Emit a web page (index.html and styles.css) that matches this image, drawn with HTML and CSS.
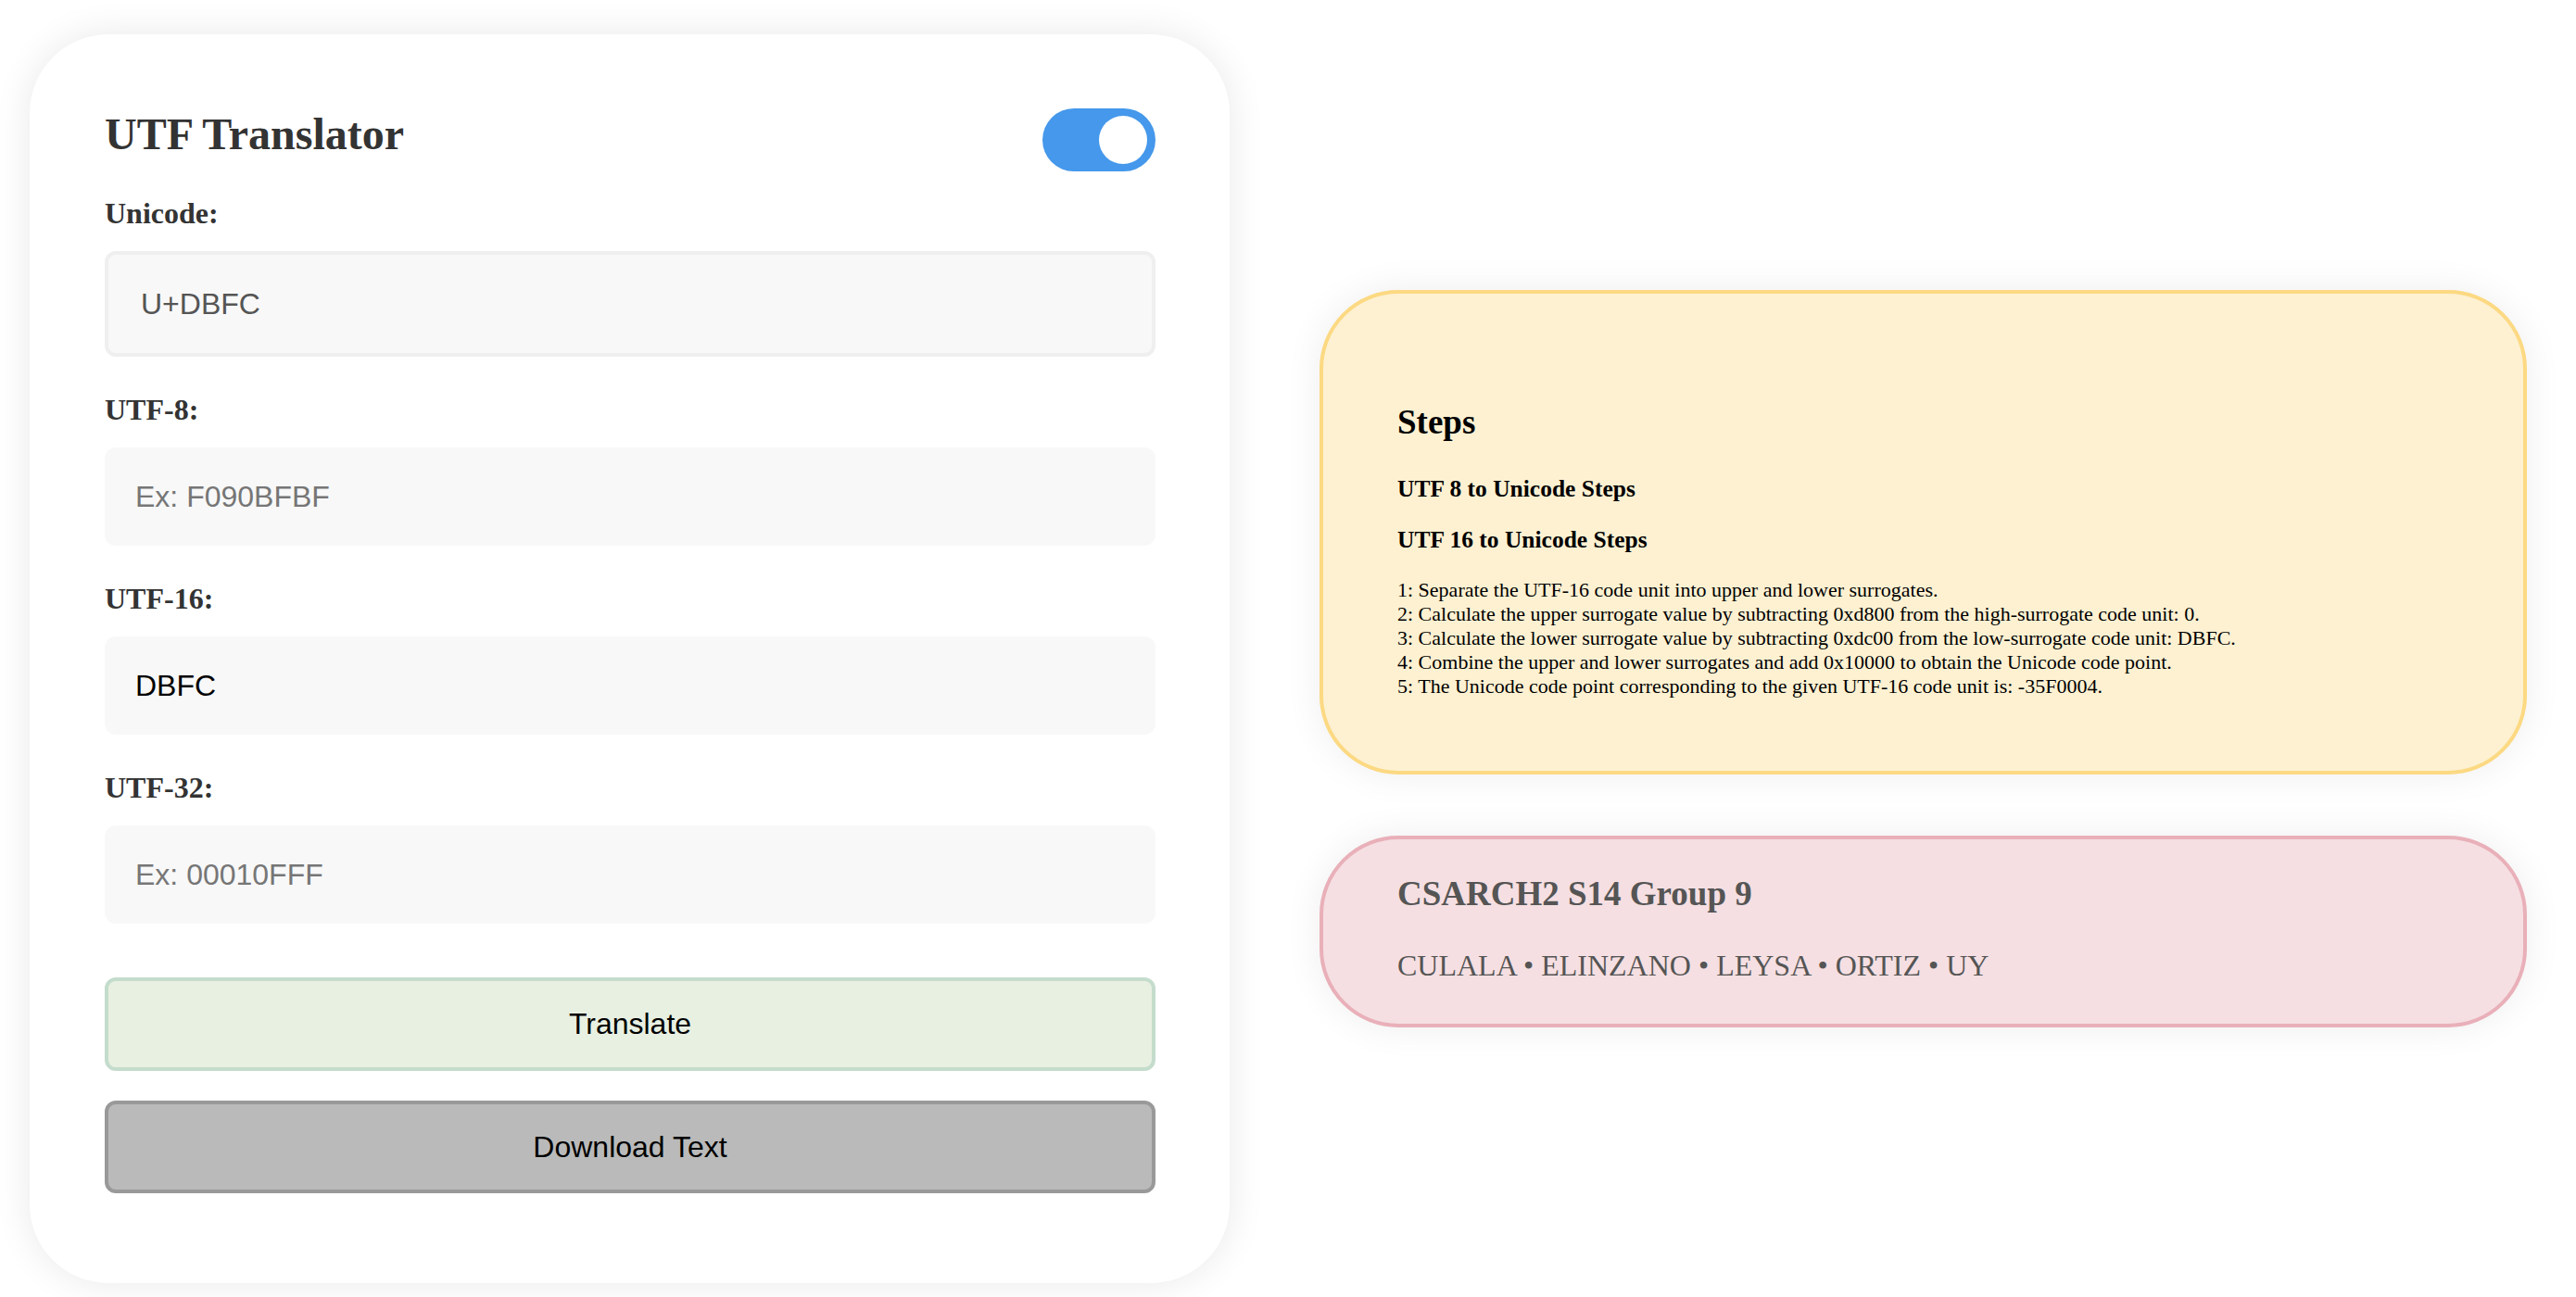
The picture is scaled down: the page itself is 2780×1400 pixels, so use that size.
FILE: index.html
```html
<!DOCTYPE html>
<html lang="en">
<head>
<meta charset="utf-8">
<title>UTF Translator</title>
<link rel="stylesheet" href="styles.css">
</head>
<body>
<main class="page">
  <section class="card">
    <div class="card-head">
      <h1 class="title">UTF Translator</h1>
      <div class="toggle"><span class="knob"></span></div>
    </div>
    <label class="label label-first">Unicode:</label>
    <div class="field field-bordered"><span class="value value-gray">U+DBFC</span></div>
    <label class="label">UTF-8:</label>
    <div class="field"><span class="value placeholder">Ex: F090BFBF</span></div>
    <label class="label">UTF-16:</label>
    <div class="field"><span class="value">DBFC</span></div>
    <label class="label">UTF-32:</label>
    <div class="field"><span class="value placeholder">Ex: 00010FFF</span></div>
    <button class="btn btn-translate">Translate</button>
    <button class="btn btn-download">Download Text</button>
  </section>

  <aside class="side">
    <section class="steps">
      <h2 class="steps-title">Steps</h2>
      <h4 class="steps-sub steps-sub-first">UTF 8 to Unicode Steps</h4>
      <h4 class="steps-sub">UTF 16 to Unicode Steps</h4>
      <div class="steps-list">
        <div>1: Separate the UTF-16 code unit into upper and lower surrogates.</div>
        <div>2: Calculate the upper surrogate value by subtracting 0xd800 from the high-surrogate code unit: 0.</div>
        <div>3: Calculate the lower surrogate value by subtracting 0xdc00 from the low-surrogate code unit: DBFC.</div>
        <div>4: Combine the upper and lower surrogates and add 0x10000 to obtain the Unicode code point.</div>
        <div>5: The Unicode code point corresponding to the given UTF-16 code unit is: -35F0004.</div>
      </div>
    </section>
    <section class="credits">
      <h2 class="credits-title">CSARCH2 S14 Group 9</h2>
      <p class="credits-names">CULALA • ELINZANO • LEYSA • ORTIZ • UY</p>
    </section>
  </aside>
</main>
</body>
</html>
```

FILE: styles.css
```css
* { box-sizing: border-box; }

html, body {
  margin: 0;
  padding: 0;
  background: #ffffff;
}

body {
  font-family: "Liberation Serif", "Times New Roman", serif;
  width: 2780px;
  height: 1400px;
  overflow: hidden;
}

.page {
  display: flex;
  align-items: center;
  gap: 97px;
  padding: 37px 0 0 32px;
}

/* ---------- left card ---------- */
.card {
  width: 1295px;
  height: 1348px;
  flex: none;
  background: #ffffff;
  border-radius: 85px;
  box-shadow: 0 0 40px rgba(0, 0, 0, 0.09);
  padding: 80px 80px 0 81px;
  display: flex;
  flex-direction: column;
}

.card-head {
  display: flex;
  justify-content: space-between;
  align-items: flex-start;
  height: 68px;
}

.title {
  margin: 0;
  font-size: 48px;
  font-weight: bold;
  line-height: normal;
  color: #333333;
}

.toggle {
  width: 122px;
  height: 68px;
  border-radius: 34px;
  background: #4598eb;
  display: flex;
  align-items: center;
  justify-content: flex-end;
  padding-right: 9px;
}

.knob {
  width: 52px;
  height: 52px;
  border-radius: 50%;
  background: #ffffff;
}

.label {
  display: block;
  font-size: 32px;
  font-weight: bold;
  line-height: 35px;
  color: #333333;
  margin-top: 40px;
  margin-bottom: 23px;
}

.label-first {
  margin-top: 28px;
}

.field {
  height: 106px;
  background: #f8f8f8;
  border-radius: 12px;
  display: flex;
  align-items: center;
  padding: 0 33px;
  font-family: "Liberation Sans", Arial, sans-serif;
  font-size: 32px;
}

.field-bordered {
  height: 114px;
  border: 4px solid #efefef;
  padding: 0 35px;
}

.value { color: #000000; }
.value-gray { color: #555555; }
.placeholder { color: #767676; }

.btn {
  display: flex;
  align-items: center;
  justify-content: center;
  width: 100%;
  font-family: "Liberation Sans", Arial, sans-serif;
  font-size: 32px;
  color: #000000;
  border-radius: 12px;
  padding: 0;
}

.btn-translate {
  margin-top: 58px;
  height: 101px;
  background: #e8f0e2;
  border: 4px solid #c4dccc;
}

.btn-download {
  margin-top: 32px;
  height: 100px;
  background: #bababa;
  border: 4px solid #999999;
}

/* ---------- right column ---------- */
.side {
  width: 1303px;
  flex: none;
  display: flex;
  flex-direction: column;
  gap: 66px;
}

.steps {
  height: 523px;
  background: #fdf1d2;
  border: 4px solid #fcd982;
  border-radius: 85px;
  box-shadow: 0 0 40px rgba(0, 0, 0, 0.07);
  padding: 118px 80px 0 80px;
  color: #000000;
}

.steps-title {
  margin: 0;
  font-size: 37px;
  font-weight: bold;
  line-height: 41px;
}

.steps-sub {
  margin: 27px 0 0 0;
  font-size: 25.5px;
  font-weight: bold;
  line-height: 28px;
}

.steps-sub-first {
  margin-top: 38px;
}

.steps-list {
  margin-top: 27px;
  font-size: 22px;
  line-height: 26px;
}

.credits {
  height: 207px;
  background: #f5dfe2;
  border: 4px solid #e9b0b9;
  border-radius: 85px;
  box-shadow: 0 0 40px rgba(0, 0, 0, 0.07);
  padding: 38px 80px 0 80px;
  color: #555555;
}

.credits-title {
  margin: 0;
  font-size: 37px;
  font-weight: bold;
  line-height: 41px;
}

.credits-names {
  margin: 40px 0 0 0;
  font-size: 32px;
  line-height: 35px;
}
```
